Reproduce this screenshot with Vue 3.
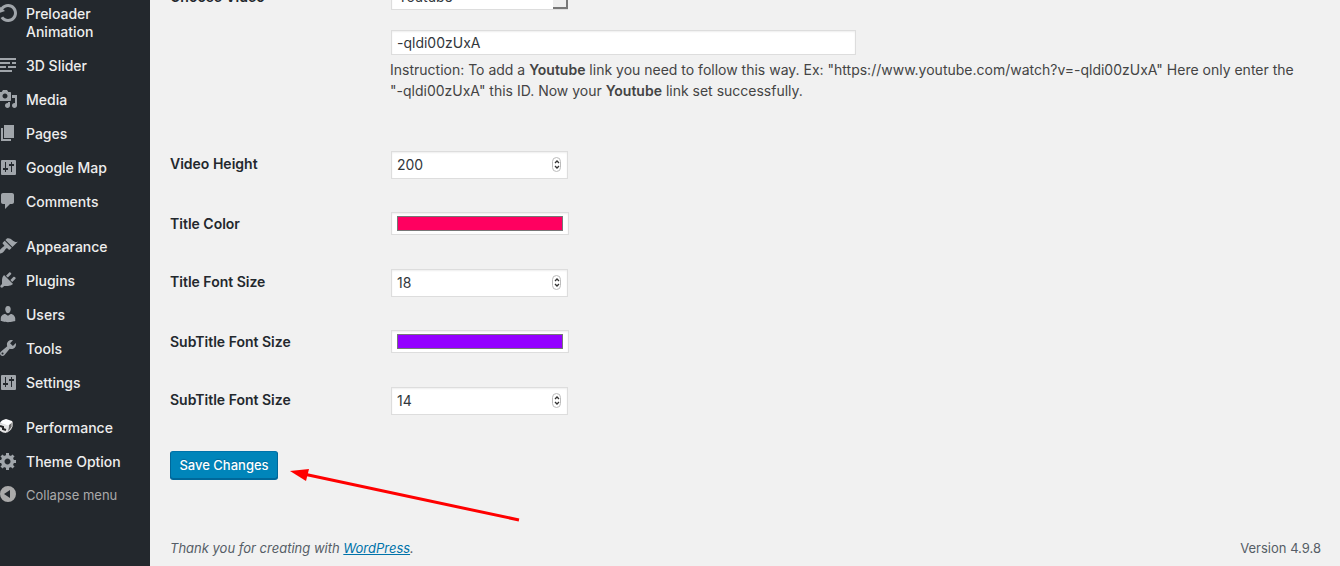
<script setup>
import { ref } from 'vue'

const settingsIcon = 'M4 3h13a1 1 0 0 1 1 1v13a1 1 0 0 1-1 1H4a1 1 0 0 1-1-1V4a1 1 0 0 1 1-1zM8 11V5H7v6H5v2h2v2h1v-2h2v-2zM14 7V5h-1v2h-2v2h2v6h1V9h2V7z'

const groups = [
  [
    { label: 'Preloader Animation', icon: 'M10.25 1.02c5.1 0 8.75 4.04 8.75 9s-3.65 9-8.75 9c-3.2 0-6.02-1.59-7.68-3.99l2.59-1.52c1.1 1.5 2.86 2.51 4.84 2.51 3.3 0 6-2.79 6-6s-2.7-6-6-6c-1.97 0-3.72 1-4.82 2.49L7 8.02l-6 2v-7L2.89 4.6c1.69-2.17 4.36-3.58 7.36-3.58z' },
    { label: '3D Slider', icon: 'M1 3h17v2H1zM1 7h11v2H1zM14 7h4v2h-4zM1 11h7v2H1zM10 11h8v2h-8zM1 15h13v2H1z' },
    { label: 'Media', icon: 'M13 11V4c0-.55-.45-1-1-1h-1.67L9 1H5L3.67 3H2c-.55 0-1 .45-1 1v7c0 .55.45 1 1 1h10c.55 0 1-.45 1-1zM7 4.5c1.38 0 2.5 1.12 2.5 2.5S8.38 9.5 7 9.5 4.5 8.38 4.5 7 5.62 4.5 7 4.5zM14 6h5v10.5c0 1.38-1.12 2.5-2.5 2.5S14 17.88 14 16.5s1.12-2.5 2.5-2.5c.17 0 .34.02.5.05V9h-3V6zm-4 8.05V13h2v3.5c0 1.38-1.12 2.5-2.5 2.5S7 17.88 7 16.5 8.12 14 9.5 14c.17 0 .34.02.5.05z' },
    { label: 'Pages', icon: 'M6 15V2h10v13H6zm-1 1h8v2H3V5h2v11z' },
    { label: 'Google Map', icon: settingsIcon },
    { label: 'Comments', icon: 'M5 2h9c1.1 0 2 .9 2 2v7c0 1.1-.9 2-2 2h-2l-5 5v-5H5c-1.1 0-2-.9-2-2V4c0-1.1.9-2 2-2z' },
  ],
  [
    { label: 'Appearance', icon: 'M14.48 11.06L7.41 3.99l1.5-1.5c.5-.56 2.3-.47 3.51.32 1.21.8 1.43 1.28 2.91 2.1 1.18.64 2.45 1.26 4.45.85zm-.71.71L6.7 4.7 4.93 6.47c-.39.39-.39 1.02 0 1.41l1.06 1.06c.39.39.39 1.03 0 1.42-.6.6-1.43 1.11-2.21 1.69-.35.26-.7.53-1.01.84C1.43 14.23.4 16.08 1.4 17.07c.99 1 2.84-.03 4.18-1.36.31-.31.58-.66.85-1.02.57-.78 1.08-1.61 1.69-2.21.39-.39 1.02-.39 1.41 0l1.06 1.06c.39.39 1.02.39 1.41 0z' },
    { label: 'Plugins', icon: 'M13.11 4.36L9.87 7.6 8 5.73l3.24-3.24c.35-.34 1.05-.2 1.56.32.52.51.66 1.21.31 1.55zm-8 1.77l.91-1.12 9.01 9.01-1.19.84c-.71.71-2.63 1.16-3.82 1.16H6.14L4.9 17.26c-.59.59-1.54.59-2.12 0-.59-.58-.59-1.53 0-2.12l1.24-1.24v-3.88c0-1.13.4-3.19 1.09-3.89zm7.26 3.97l3.24-3.24c.34-.35 1.04-.21 1.55.31.52.51.66 1.21.31 1.55l-3.24 3.25z' },
    { label: 'Users', icon: 'M10 9.25c-2.27 0-2.73-3.44-2.73-3.44C7 4.02 7.82 2 9.97 2c2.16 0 2.98 2.02 2.71 3.81 0 0-.41 3.44-2.68 3.44zm0 2.57L12.72 10c2.39 0 4.52 2.33 4.52 4.53v2.49s-3.65 1.13-7.24 1.13c-3.65 0-7.24-1.13-7.24-1.13v-2.49c0-2.25 1.94-4.48 4.47-4.48z' },
    { label: 'Tools', icon: 'M16.68 9.77c-1.34 1.34-3.3 1.67-4.95.99l-5.41 6.52c-.99.99-2.59.99-3.58 0s-.99-2.59 0-3.57l6.52-5.42c-.68-1.65-.35-3.61.99-4.95 1.28-1.28 3.12-1.62 4.72-1.06l-2.89 2.89 2.82 2.82 2.86-2.87c.53 1.58.18 3.39-1.08 4.65zM3.81 16.21c.4.39 1.04.39 1.43 0 .4-.4.4-1.04 0-1.43-.39-.4-1.03-.4-1.43 0-.39.39-.39 1.03 0 1.43z' },
    { label: 'Settings', icon: settingsIcon },
  ],
  [
    { label: 'Performance', cube: true },
    { label: 'Theme Option', icon: 'M18 12h-2.18c-.17.7-.44 1.35-.81 1.93l1.54 1.54-2.1 2.1-1.54-1.54c-.58.36-1.23.63-1.91.79V19H8v-2.18c-.68-.16-1.33-.43-1.91-.79l-1.54 1.54-2.12-2.12 1.54-1.54c-.36-.58-.63-1.23-.79-1.91H1V9.03h2.17c.16-.7.44-1.35.8-1.94L2.43 5.55l2.1-2.1 1.54 1.54c.58-.37 1.24-.64 1.93-.81V2h3v2.18c.68.16 1.33.43 1.91.79l1.54-1.54 2.12 2.12-1.54 1.54c.36.59.64 1.24.8 1.94H18V12zm-8.5 1.5c1.66 0 3-1.34 3-3s-1.34-3-3-3-3 1.34-3 3 1.34 3 3 3z' },
  ],
]

const source = ref('Youtube')
const videoId = ref('-qldi00zUxA')
const fields = ref([
  { id: 'video-height', label: 'Video Height', type: 'number', value: 200 },
  { id: 'title-color', label: 'Title Color', type: 'color', value: '#ff0060' },
  { id: 'title-size', label: 'Title Font Size', type: 'number', value: 18 },
  { id: 'subtitle-color', label: 'SubTitle Font Size', type: 'color', value: '#9400ff' },
  { id: 'subtitle-size', label: 'SubTitle Font Size', type: 'number', value: 14 },
])

function step(field, amount) {
  field.value = Number(field.value) + amount
}
</script>

<template>
  <div class="admin">
    <nav class="menu" aria-label="Main menu">
      <ul v-for="(group, g) in groups" :key="g" class="group">
        <li v-for="item in group" :key="item.label">
          <a href="#" class="item">
            <svg v-if="item.cube" class="icon" viewBox="0 0 20 20" aria-hidden="true">
              <path d="M2 6Q3 3 8 2l6 2q1 1 0 2l-3 4z" fill="#fff" />
              <path d="M15 5q0 6-2 8l-4 3 2-8z" fill="#666" />
              <path d="M1 6q5 0 10 3 0 5-3 7-4 0-8-4z" fill="#e4e4e4" />
              <path d="M2 9l3 1v2l3 1" stroke="#222" stroke-width="2" fill="none" />
              <path d="M14 5q1 5-2 8l-3 2" stroke="#ddd" fill="none" />
            </svg>
            <svg v-else class="icon" viewBox="0 0 20 20" aria-hidden="true">
              <path :d="item.icon" fill-rule="evenodd" />
            </svg>
            <span>{{ item.label }}</span>
          </a>
        </li>
      </ul>
      <button type="button" class="item collapse">
        <svg class="icon" viewBox="0 0 20 20" aria-hidden="true">
          <path d="M10 2a8 8 0 1 0 0 16 8 8 0 0 0 0-16zM12 6v8l-6-4z" fill-rule="evenodd" />
        </svg>
        <span>Collapse menu</span>
      </button>
    </nav>

    <main class="content">
      <form @submit.prevent>
        <div class="row source-row">
          <label class="label" for="source">Choose Video</label>
          <div class="select-wrap">
            <select id="source" v-model="source" class="control">
              <option>Youtube</option>
              <option>Vimeo</option>
            </select>
            <span class="select-end"></span>
          </div>
        </div>
        <div class="row id-row">
          <div class="label"></div>
          <div class="id-field">
            <input v-model="videoId" type="text" class="control video-id" aria-label="Video ID" />
            <p class="help">
              Instruction: To add a <strong>Youtube</strong> link you need to follow this way. Ex:
              "https://www.youtube.com/watch?v=-qldi00zUxA" Here only enter the<br />
              "-qldi00zUxA" this ID. Now your <strong>Youtube</strong> link set successfully.
            </p>
          </div>
        </div>
        <div class="fields">
          <div v-for="field in fields" :key="field.id" class="row" :class="field.type + '-row'">
            <label class="label" :for="field.id">{{ field.label }}</label>
            <div v-if="field.type === 'number'" class="number">
              <input :id="field.id" v-model="field.value" type="number" class="control" />
              <span class="stepper">
                <button type="button" aria-label="Increase" @click="step(field, 1)">
                  <svg viewBox="0 0 6 5" aria-hidden="true"><path d="M1 4l2-2 2 2" /></svg>
                </button>
                <button type="button" aria-label="Decrease" @click="step(field, -1)">
                  <svg viewBox="0 0 6 5" aria-hidden="true"><path d="M1 1l2 2 2-2" /></svg>
                </button>
              </span>
            </div>
            <input v-else :id="field.id" v-model="field.value" type="color" class="color" />
          </div>
        </div>
        <div class="submit">
          <button type="submit" class="save">Save Changes</button>
          <svg class="arrow" viewBox="0 0 232 60" aria-hidden="true">
            <path d="M16 10.500 229 56" fill="none" stroke="#f00" stroke-width="3" />
            <path d="M0 7 19 5 16 17z" fill="#f00" />
          </svg>
        </div>
      </form>
      <footer class="footer">
        <em>Thank you for creating with <a href="#">WordPress</a>.</em>
        <span>Version 4.9.8</span>
      </footer>
    </main>
  </div>
</template>

<style>
body {
  background: #f1f1f1;
  overflow: hidden;
}
</style>

<style scoped>
.admin {
  display: flex;
  height: 100vh;
  overflow: hidden;
  font: 14px/18px Inter, "Liberation Sans", sans-serif;
  color: #444;
}
.menu {
  flex: none;
  width: 150px;
  box-sizing: border-box;
  background: #23282d;
  overflow: hidden;
}
.group {
  list-style: none;
  margin: -3px 0 14px;
  padding: 0;
}
.item {
  display: flex;
  gap: 8px;
  padding: 8px 24px 8px 0;
  color: #eee;
  font-weight: 500;
  text-decoration: none;
}
.icon {
  flex: none;
  width: 20px;
  height: 20px;
  margin: -2px 0 0 -2px;
  fill: #a0a5aa;
}
.collapse {
  width: 100%;
  margin-top: -15px;
  padding-right: 0;
  border: 0;
  background: none;
  font: inherit;
  font-size: 13px;
  color: #aaa;
  text-align: left;
}
.collapse .icon {
  fill: #aaa;
}
.content {
  flex: 1;
  min-width: 0;
  padding: 0 19px 0 20px;
  display: flex;
  flex-direction: column;
}
.row {
  display: flex;
}
.label {
  flex: none;
  width: 221px;
  font-weight: 600;
  color: #23282d;
}
.control,
.color {
  box-sizing: border-box;
  border: 1px solid #ddd;
  border-radius: 0;
  background: #fff;
  box-shadow: inset 0 1px 2px rgba(0, 0, 0, 0.07);
  color: #32373c;
  font: inherit;
  outline: 0;
}
.source-row {
  margin-top: -18px;
  align-items: flex-start;
}
.source-row .label {
  padding-top: 6px;
}
.select-wrap {
  display: flex;
  position: relative;
}
.select-wrap .control {
  appearance: none;
  width: 177px;
  height: 28px;
  padding: 2px 6px 0;
}
.select-end {
  position: absolute;
  right: 0;
  bottom: 1px;
  width: 15px;
  height: 24px;
  box-sizing: border-box;
  background: #eee;
  border-right: 2px solid #777;
  border-bottom: 2px solid #777;
}
.id-row {
  margin-top: 20px;
}
.video-id {
  display: block;
  width: 465px;
  height: 25px;
  padding: 0 5px;
}
.help {
  margin: 4px 0 0 -1px;
  line-height: 21px;
}
.help strong {
  font-weight: 600;
}
.fields {
  display: grid;
  grid-auto-rows: 59px;
  align-items: center;
  margin-top: 34px;
}
.fields .row {
  align-items: center;
}
.number-row .label {
  padding-bottom: 2px;
}
.number {
  display: flex;
  position: relative;
}
.number .control {
  width: 177px;
  height: 28px;
  padding: 2px 5px;
  appearance: textfield;
}
.number .control::-webkit-inner-spin-button {
  display: none;
}
.stepper {
  position: absolute;
  right: 7px;
  top: 6px;
  width: 9px;
  height: 15px;
  box-sizing: border-box;
  border: 1px solid #bbb;
  border-radius: 5px;
  display: flex;
  flex-direction: column;
  justify-content: center;
  gap: 1px;
  background: #fff;
}
.stepper button {
  display: flex;
  justify-content: center;
  padding: 0;
  border: 0;
  background: none;
}
.stepper svg {
  width: 6px;
  height: 5px;
  fill: none;
  stroke: #333;
  stroke-width: 1.3;
}
.color {
  width: 178px;
  height: 23px;
  padding: 3px 5px;
}
.color::-webkit-color-swatch-wrapper {
  padding: 0;
}
.color::-webkit-color-swatch {
  border: 1px solid #777;
  border-radius: 0;
}
.submit {
  display: flex;
  align-items: flex-start;
  margin-top: 21px;
}
.save {
  width: 108px;
  height: 28px;
  padding: 0;
  border: 1px solid #006799;
  border-top-color: #0073aa;
  border-radius: 3px;
  background: #0085ba;
  box-shadow: 0 1px 0 #006799;
  color: #fff;
  font: 500 13px/26px Inter, "Liberation Sans", sans-serif;
  text-shadow: 0 -1px 1px #006799;
}
.arrow {
  width: 232px;
  height: 60px;
  margin: 13px 0 0 12px;
}
.footer {
  display: flex;
  justify-content: space-between;
  margin-top: 14px;
  font-size: 13px;
  line-height: 20px;
  color: #555d66;
}
.footer a {
  color: #0073aa;
}
</style>
